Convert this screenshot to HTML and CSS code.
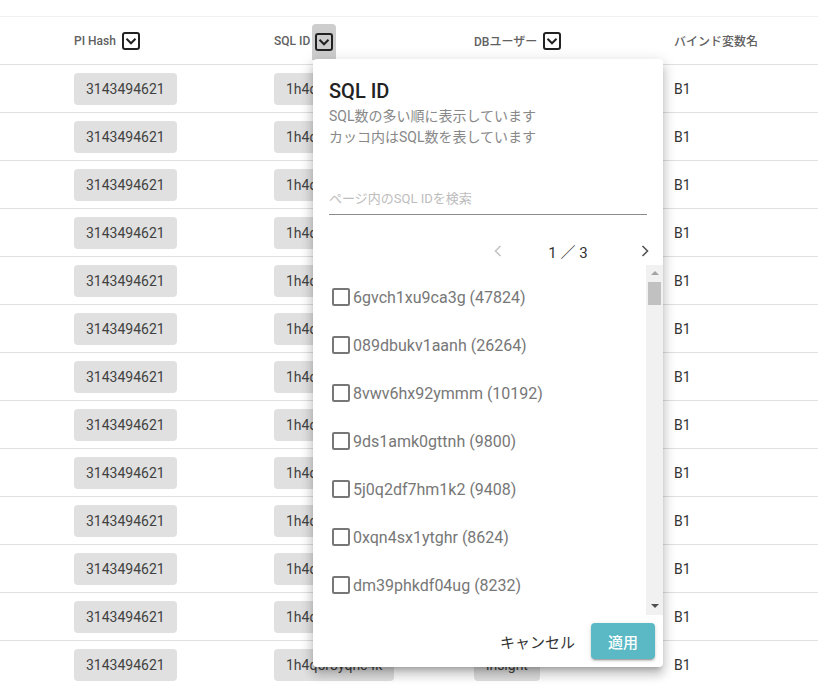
FILE: index.html
```html
<!DOCTYPE html>
<html lang="ja">
<head>
    <meta charset="UTF-8">
    <title>SQL一覧</title>
    <link rel="stylesheet" href="styles.css">
</head>
<body>
    <div class="sql-table">
        <!-- Header -->
        <div class="row head">
            <div class="cell"></div>
            <div class="cell">PI Hash
                <button class="filter-btn"><svg width="18" height="18" viewBox="0 0 18 18"><rect x="1" y="1" width="16" height="16" rx="2" fill="none" stroke="#222" stroke-width="2"/><path d="M4.5 6.8 L9 11.3 L13.5 6.8" fill="none" stroke="#222" stroke-width="2"/></svg></button>
            </div>
            <div class="cell">SQL ID
                <button class="filter-btn active"><svg width="18" height="18" viewBox="0 0 18 18"><rect x="1" y="1" width="16" height="16" rx="2" fill="none" stroke="#222" stroke-width="2"/><path d="M4.5 6.8 L9 11.3 L13.5 6.8" fill="none" stroke="#222" stroke-width="2"/></svg></button>
            </div>
            <div class="cell">DBユーザー
                <button class="filter-btn"><svg width="18" height="18" viewBox="0 0 18 18"><rect x="1" y="1" width="16" height="16" rx="2" fill="none" stroke="#222" stroke-width="2"/><path d="M4.5 6.8 L9 11.3 L13.5 6.8" fill="none" stroke="#222" stroke-width="2"/></svg></button>
            </div>
            <div class="cell">バインド変数名</div>
        </div>

        <!-- Rows -->
        <div class="row"><div class="cell"></div><div class="cell"><span class="chip">3143494621</span></div><div class="cell"><span class="chip">1h4q5r8yqhc4k</span></div><div class="cell"><span class="chip">insight</span></div><div class="cell">B1</div></div>
        <div class="row"><div class="cell"></div><div class="cell"><span class="chip">3143494621</span></div><div class="cell"><span class="chip">1h4q5r8yqhc4k</span></div><div class="cell"><span class="chip">insight</span></div><div class="cell">B1</div></div>
        <div class="row"><div class="cell"></div><div class="cell"><span class="chip">3143494621</span></div><div class="cell"><span class="chip">1h4q5r8yqhc4k</span></div><div class="cell"><span class="chip">insight</span></div><div class="cell">B1</div></div>
        <div class="row"><div class="cell"></div><div class="cell"><span class="chip">3143494621</span></div><div class="cell"><span class="chip">1h4q5r8yqhc4k</span></div><div class="cell"><span class="chip">insight</span></div><div class="cell">B1</div></div>
        <div class="row"><div class="cell"></div><div class="cell"><span class="chip">3143494621</span></div><div class="cell"><span class="chip">1h4q5r8yqhc4k</span></div><div class="cell"><span class="chip">insight</span></div><div class="cell">B1</div></div>
        <div class="row"><div class="cell"></div><div class="cell"><span class="chip">3143494621</span></div><div class="cell"><span class="chip">1h4q5r8yqhc4k</span></div><div class="cell"><span class="chip">insight</span></div><div class="cell">B1</div></div>
        <div class="row"><div class="cell"></div><div class="cell"><span class="chip">3143494621</span></div><div class="cell"><span class="chip">1h4q5r8yqhc4k</span></div><div class="cell"><span class="chip">insight</span></div><div class="cell">B1</div></div>
        <div class="row"><div class="cell"></div><div class="cell"><span class="chip">3143494621</span></div><div class="cell"><span class="chip">1h4q5r8yqhc4k</span></div><div class="cell"><span class="chip">insight</span></div><div class="cell">B1</div></div>
        <div class="row"><div class="cell"></div><div class="cell"><span class="chip">3143494621</span></div><div class="cell"><span class="chip">1h4q5r8yqhc4k</span></div><div class="cell"><span class="chip">insight</span></div><div class="cell">B1</div></div>
        <div class="row"><div class="cell"></div><div class="cell"><span class="chip">3143494621</span></div><div class="cell"><span class="chip">1h4q5r8yqhc4k</span></div><div class="cell"><span class="chip">insight</span></div><div class="cell">B1</div></div>
        <div class="row"><div class="cell"></div><div class="cell"><span class="chip">3143494621</span></div><div class="cell"><span class="chip">1h4q5r8yqhc4k</span></div><div class="cell"><span class="chip">insight</span></div><div class="cell">B1</div></div>
        <div class="row"><div class="cell"></div><div class="cell"><span class="chip">3143494621</span></div><div class="cell"><span class="chip">1h4q5r8yqhc4k</span></div><div class="cell"><span class="chip">insight</span></div><div class="cell">B1</div></div>
        <div class="row"><div class="cell"></div><div class="cell"><span class="chip">3143494621</span></div><div class="cell"><span class="chip">1h4q5r8yqhc4k</span></div><div class="cell"><span class="chip">insight</span></div><div class="cell">B1</div></div>
    </div>

    <!-- SQL ID filter menu -->
    <div class="filter-menu">
        <div class="menu-head">
            <h2 class="menu-title">SQL ID</h2>
            <p class="menu-desc">SQL数の多い順に表示しています</p>
            <p class="menu-desc">カッコ内はSQL数を表しています</p>
            <input class="menu-search" type="text" placeholder="ページ内のSQL IDを検索">
            <div class="pager">
                <button class="pager-btn disabled"><svg width="24" height="24" viewBox="0 0 24 24"><path d="M14.5 7 L9.5 12 L14.5 17" fill="none" stroke="#c4c4c4" stroke-width="1.6"/></svg></button>
                <span class="pager-label">1 ／ 3</span>
                <button class="pager-btn next"><svg width="24" height="24" viewBox="0 0 24 24"><path d="M9.5 7 L14.5 12 L9.5 17" fill="none" stroke="#555" stroke-width="1.6"/></svg></button>
            </div>
        </div>

        <div class="menu-list-wrap">
            <ul class="menu-list">
                <li><span class="check"></span>6gvch1xu9ca3g (47824)</li>
                <li><span class="check"></span>089dbukv1aanh (26264)</li>
                <li><span class="check"></span>8vwv6hx92ymmm (10192)</li>
                <li><span class="check"></span>9ds1amk0gttnh (9800)</li>
                <li><span class="check"></span>5j0q2df7hm1k2 (9408)</li>
                <li><span class="check"></span>0xqn4sx1ytghr (8624)</li>
                <li><span class="check"></span>dm39phkdf04ug (8232)</li>
            </ul>
            <div class="scrollbar">
                <span class="arrow-up"></span>
                <span class="thumb"></span>
                <span class="track-fill"></span>
                <span class="arrow-down"></span>
            </div>
        </div>

        <div class="menu-actions">
            <button class="btn-text">キャンセル</button>
            <button class="btn-apply">適用</button>
        </div>
    </div>
</body>
</html>
```

FILE: styles.css
```css
/* General */
body {
    font-family: Roboto, "Noto Sans CJK JP", sans-serif;
    background-color: #fff;
    color: #333;
    margin: 0;
    padding: 0;
    overflow: hidden;
}

button {
    font-family: inherit;
    border: none;
    background: none;
    padding: 0;
    cursor: pointer;
}

/* Table */
.sql-table {
    margin-top: 16px;
    border-top: 1px solid #f0f0f0;
}

.row {
    display: grid;
    grid-template-columns: 58px 200px 200px 200px 1fr;
    height: 48px;
    border-bottom: 1px solid #e0e0e0;
    box-sizing: border-box;
    font-size: 14px;
    color: #333;
}

.row.head {
    height: 48px;
    font-size: 12px;
    font-weight: 500;
    color: #616161;
}

.cell {
    display: flex;
    align-items: center;
    padding: 0 16px;
    white-space: nowrap;
}

.filter-btn {
    display: flex;
    align-items: center;
    justify-content: center;
    width: 24px;
    height: 36px;
    margin-left: 3px;
    border-radius: 4px 4px 0 0;
}

.filter-btn.active {
    background-color: #cdcdcd;
    margin-left: 2px;
    margin-top: 2px;
}

.chip {
    display: inline-block;
    background-color: #e0e0e0;
    color: #424242;
    border-radius: 4px;
    padding: 0 12px;
    height: 32px;
    line-height: 32px;
}

/* Filter menu */
.filter-menu {
    position: absolute;
    left: 313px;
    top: 59px;
    width: 350px;
    height: 608px;
    background-color: #fff;
    border-radius: 4px;
    box-shadow: 0 5px 5px -3px rgba(0, 0, 0, 0.2), 0 8px 10px 1px rgba(0, 0, 0, 0.14), 0 3px 14px 2px rgba(0, 0, 0, 0.12);
    display: flex;
    flex-direction: column;
    overflow: hidden;
}

.menu-head {
    padding: 20px 16px 0;
}

.menu-title {
    margin: 0 0 3px;
    font-size: 20px;
    line-height: 24px;
    font-weight: 500;
    color: #222;
}

.menu-desc {
    margin: 0;
    height: 21px;
    font-size: 14px;
    line-height: 21px;
    color: #888;
    overflow: visible;
}

.menu-search {
    display: block;
    width: 100%;
    box-sizing: border-box;
    margin-top: 34px;
    height: 33px;
    padding: 0;
    border: none;
    border-bottom: 1px solid #8a8a8a;
    font-family: inherit;
    font-size: 13px;
    outline: none;
}

.menu-search::placeholder {
    color: #bdbdbd;
}

.pager {
    display: flex;
    align-items: center;
    justify-content: flex-end;
    height: 28px;
    margin-top: 22px;
    margin-right: -10px;
}

.pager-btn {
    display: flex;
    width: 24px;
    height: 24px;
}

.pager-label {
    width: 116px;
    text-align: center;
    font-size: 15px;
    color: #333;
}

.pager-btn.next {
    margin-left: 7px;
}

.menu-list-wrap {
    display: flex;
    height: 350px;
}

.menu-list {
    flex: 1;
    list-style: none;
    margin: 0;
    padding: 8px 0 0 19px;
    overflow: hidden;
}

.menu-list li {
    display: flex;
    align-items: center;
    height: 48px;
    font-size: 16px;
    color: #777;
}

.check {
    width: 18px;
    height: 18px;
    box-sizing: border-box;
    border: 2px solid #777;
    border-radius: 2px;
    margin-right: 3px;
}

/* Scrollbar */
.scrollbar {
    width: 17px;
    background-color: #f1f1f1;
    display: flex;
    flex-direction: column;
    align-items: center;
}

.arrow-up,
.arrow-down {
    display: flex;
    width: 0;
    height: 0;
    border-left: 4px solid transparent;
    border-right: 4px solid transparent;
}

.arrow-up {
    border-bottom: 4px solid #a3a3a3;
    margin: 6px 0 7px;
}

.arrow-down {
    border-top: 4px solid #505050;
    margin: 6px 0 7px;
}

.thumb {
    width: 13px;
    height: 23px;
    background-color: #c1c1c1;
}

.track-fill {
    flex: 1;
}

/* Actions */
.menu-actions {
    display: flex;
    justify-content: flex-end;
    gap: 8px;
    padding: 8px;
}

.btn-text {
    height: 36px;
    padding: 0 8px;
    font-size: 15px;
    color: #333;
}

.btn-apply {
    height: 36px;
    min-width: 64px;
    padding: 0 16px;
    font-size: 15px;
    font-weight: 500;
    color: #fff;
    background-color: #5bb9c6;
    border-radius: 4px;
    box-shadow: 0 3px 1px -2px rgba(0, 0, 0, 0.2), 0 2px 2px 0 rgba(0, 0, 0, 0.14), 0 1px 5px 0 rgba(0, 0, 0, 0.12);
}
```
